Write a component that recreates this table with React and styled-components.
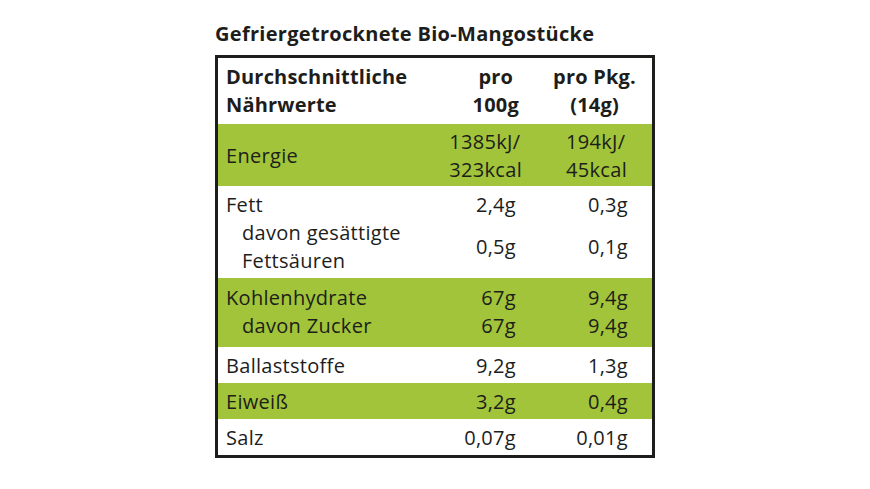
import React from "react";
import styled, { createGlobalStyle } from "styled-components";

const Global = createGlobalStyle`
  html, body { margin: 0; padding: 0; background: #ffffff; }
  body { font-family: "Open Sans", "Noto Sans", sans-serif; color: #1d1d1b; }
`;

const GREEN = "#a1c43a";

const Page = styled.div`
  width: 440px;
  margin: 0 auto;
  padding-top: 22px;
`;

const Title = styled.h1`
  margin: 0 0 9px 0;
  font-size: 20px;
  line-height: 24px;
  font-weight: 700;
  letter-spacing: 0.3px;
`;

const Table = styled.div`
  border: 3px solid #1d1d1b;
  display: flex;
  flex-direction: column;
`;

const Section = styled.div`
  background: ${(p) => (p.$green ? GREEN : "#ffffff")};
  display: grid;
  grid-template-columns: 222px 90px 122px;
  align-items: center;
  padding: ${(p) => p.$pad || "5px 0 3px"};
  font-size: 20px;
  line-height: 28px;
  letter-spacing: ${(p) => (p.$bold ? 0.2 : 0.3)}px;
  font-weight: ${(p) => (p.$bold ? 700 : 400)};
`;

const Label = styled.div`
  padding-left: ${(p) => (p.$indent ? 24 : 8)}px;
  white-space: nowrap;
`;

const Value = styled.div`
  text-align: right;
  padding-right: ${(p) => (p.$col === 2 ? 24 : 14)}px;
  white-space: nowrap;
`;

const EnergyValue = styled.div`
  justify-self: end;
  text-align: left;
  margin-right: ${(p) => (p.$col === 2 ? 25 : 8)}px;
  white-space: nowrap;
`;

const HeadValue = styled.div`
  justify-self: end;
  text-align: center;
  margin-right: ${(p) => (p.$col === 2 ? 16 : 11)}px;
  white-space: nowrap;
`;

const rows = [
  { label: "Kohlenhydrate", a: "67g", b: "9,4g" },
  { label: "davon Zucker", a: "67g", b: "9,4g", indent: true },
];

export default function App() {
  return (
    <>
      <Global />
      <Page>
        <Title>Gefriergetrocknete Bio-Mangostücke</Title>
        <Table>
          <Section $bold $pad="5px 0">
            <Label>
              Durchschnittliche
              <br />
              Nährwerte
            </Label>
            <HeadValue $col={1}>
              pro
              <br />
              100g
            </HeadValue>
            <HeadValue $col={2}>
              pro Pkg.
              <br />
              (14g)
            </HeadValue>
          </Section>

          <Section $green $pad="4px 0 2px">
            <Label>Energie</Label>
            <EnergyValue $col={1}>
              1385kJ/
              <br />
              323kcal
            </EnergyValue>
            <EnergyValue $col={2}>
              194kJ/
              <br />
              45kcal
            </EnergyValue>
          </Section>

          <Section $pad="5px 0 3px">
            <Label>Fett</Label>
            <Value $col={1}>2,4g</Value>
            <Value $col={2}>0,3g</Value>
            <Label $indent>
              davon gesättigte
              <br />
              Fettsäuren
            </Label>
            <Value $col={1}>0,5g</Value>
            <Value $col={2}>0,1g</Value>
          </Section>

          <Section $green $pad="6px 0 7px">
            {rows.map((r) => (
              <React.Fragment key={r.label}>
                <Label $indent={r.indent}>{r.label}</Label>
                <Value $col={1}>{r.a}</Value>
                <Value $col={2}>{r.b}</Value>
              </React.Fragment>
            ))}
          </Section>

          <Section>
            <Label>Ballaststoffe</Label>
            <Value $col={1}>9,2g</Value>
            <Value $col={2}>1,3g</Value>
          </Section>
          <Section $green>
            <Label>Eiweiß</Label>
            <Value $col={1}>3,2g</Value>
            <Value $col={2}>0,4g</Value>
          </Section>
          <Section>
            <Label>Salz</Label>
            <Value $col={1}>0,07g</Value>
            <Value $col={2}>0,01g</Value>
          </Section>
        </Table>
      </Page>
    </>
  );
}
